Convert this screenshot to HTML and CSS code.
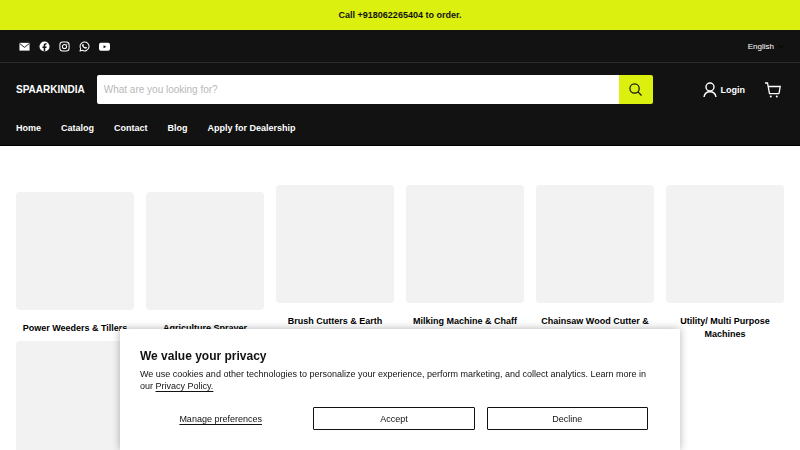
FILE: index.html
```html
<!DOCTYPE html>
<html lang="en">
<head>
  <meta charset="UTF-8" />
  <meta name="viewport" content="width=device-width, initial-scale=1" />
  <title>SPAARKINDIA</title>
  <link rel="stylesheet" href="styles.css">
</head>
<body>

  <div class="announcement">Call +918062265404 to order.</div>

  <header class="site-header">
    <div class="top-bar">
      <div class="social">
        <a href="#" aria-label="Email">
          <svg viewBox="0 0 24 24"><path fill="#fff" d="M1 4h22v17H1z"/><path d="M1 5l11 9 11-9" fill="none" stroke="#121212" stroke-width="2"/></svg>
        </a>
        <a href="#" aria-label="Facebook">
          <svg viewBox="0 0 24 24"><circle cx="12" cy="12" r="11" fill="#fff"/><path fill="#121212" d="M10.200 23v-8H7.400v-3.200h2.800V9.300c0-2.800 1.700-4.300 4.200-4.300 1.200 0 2.400.2 2.400.2v2.700h-1.400c-1.400 0-1.800.9-1.800 1.700v2.200h3.100l-.5 3.200h-2.600v8z"/></svg>
        </a>
        <a href="#" aria-label="Instagram">
          <svg viewBox="0 0 24 24" fill="none" stroke="#fff" stroke-width="2.200"><rect x="2" y="2" width="20" height="20" rx="6"/><circle cx="12" cy="12" r="4.600"/><circle cx="17.500" cy="6.500" r="1.300" fill="#fff" stroke="none"/></svg>
        </a>
        <a href="#" aria-label="WhatsApp">
          <svg viewBox="0 0 24 24"><path fill="none" stroke="#fff" stroke-width="2.200" stroke-linejoin="round" d="M2.200 21.800l1.500-5.200a9.700 9.700 0 1 1 3.700 3.700z"/><path fill="#fff" d="M8.200 6.600c.6-.5 1.200-.3 1.400.2l.9 2c.2.500-.8 1.400-.6 1.800.8 1.500 2 2.600 3.500 3.200.5.200 1.200-1.300 1.700-1.100l2 1c.5.300.3 1.400-.2 2-.9 1-2.200 1.200-3.500.8-3.300-1-5.300-2.900-6.500-5.600-.6-1.500-.1-3.300 1.300-4.300z"/></svg>
        </a>
        <a href="#" aria-label="YouTube">
          <svg viewBox="0 0 24 24"><rect x="0" y="4" width="24" height="17" rx="4" fill="#fff"/><path d="M10 9l6 3.500-6 3.500z" fill="#121212"/></svg>
        </a>
      </div>
      <button class="language" type="button">
        English
        <svg viewBox="0 0 10 6"><path d="M1 1l4 4 4-4" fill="none" stroke="#000" stroke-width="2"/></svg>
      </button>
    </div>

    <div class="main-bar">
      <a href="#" class="logo">SPAARKINDIA</a>
      <form class="search">
        <input type="text" placeholder="What are you looking for?" aria-label="Search" />
        <button type="button" aria-label="Search">
          <svg viewBox="0 0 14 14" fill="none" stroke="#121212" stroke-width="1.300"><circle cx="6" cy="6" r="5"/><path d="M9.600 9.600l3.900 3.900"/></svg>
        </button>
      </form>
      <a href="#" class="login">
        <svg viewBox="0 0 14 16" fill="none" stroke="#fff" stroke-width="1.400"><circle cx="7" cy="5" r="4"/><path d="M1 15c.5-3.300 3-5.300 6-5.300s5.500 2 6 5.300"/></svg>
        Login
      </a>
      <a href="#" class="cart" aria-label="Cart">
        <svg viewBox="0 0 16 16" fill="none" stroke="#fff" stroke-width="1.300"><path d="M0 1h2.500l2 10.700h9.300M3 4.500h12.200l-1.200 7.200"/><circle cx="5.800" cy="14.600" r="1" fill="#fff" stroke="none"/><circle cx="11.800" cy="14.600" r="1" fill="#fff" stroke="none"/></svg>
      </a>
    </div>

    <nav class="main-nav">
      <a href="#">Home</a>
      <a href="#">Catalog</a>
      <a href="#">Contact</a>
      <a href="#">Blog</a>
      <a href="#">Apply for Dealership</a>
    </nav>
  </header>

  <!-- Collections -->
  <main class="collections">
    <a href="#" class="collection"><span class="thumb"></span>Power Weeders &amp; Tillers</a>
    <a href="#" class="collection"><span class="thumb"></span>Agriculture Sprayer</a>
    <a href="#" class="collection"><span class="thumb"></span>Brush Cutters &amp; Earth Augers</a>
    <a href="#" class="collection"><span class="thumb"></span>Milking Machine &amp; Chaff Cutter</a>
    <a href="#" class="collection"><span class="thumb"></span>Chainsaw Wood Cutter &amp; Pruners</a>
    <a href="#" class="collection"><span class="thumb"></span>Utility/ Multi Purpose Machines</a>
    <a href="#" class="collection" aria-label="More products"><span class="thumb"></span></a>
  </main>

  <!-- Cookie banner -->
  <div class="privacy" role="dialog" aria-labelledby="privacyTitle">
    <h2 id="privacyTitle">We value your privacy</h2>
    <p>We use cookies and other technologies to personalize your experience, perform marketing, and collect analytics. Learn more in our <a href="#">Privacy Policy.</a></p>
    <div class="privacy-buttons">
      <button type="button" class="manage">Manage preferences</button>
      <button type="button">Accept</button>
      <button type="button">Decline</button>
    </div>
  </div>

</body>
</html>
```
FILE: styles.css
```css
* {
  box-sizing: border-box;
}

body {
  margin: 0;
  height: 100vh;
  overflow: hidden;
  font-family: "Liberation Sans", Arial, sans-serif;
  font-size: 9px;
  color: #121212;
  background: #fff;
}

a {
  color: inherit;
  text-decoration: none;
}

button,
input {
  font-family: inherit;
  font-size: inherit;
  color: inherit;
}

svg {
  display: block;
}

.announcement {
  padding: 9px 16px;
  background: #dbf00e;
  font-weight: bold;
  line-height: 12px;
  text-align: center;
}

.site-header {
  background: #121212;
  color: #fff;
  border-bottom: 1px solid #000;
}

.top-bar {
  display: flex;
  justify-content: space-between;
  align-items: center;
  height: 33px;
  padding: 0 16px 0 19px;
  border-bottom: 1px solid #2d2d2d;
}

.social {
  display: flex;
  gap: 9px;
}

.social svg {
  width: 11px;
  height: 11px;
}

.language {
  display: flex;
  align-items: center;
  gap: 5px;
  padding: 0;
  border: none;
  background: none;
  font-size: 8px;
}

.language svg {
  width: 5px;
  height: 3px;
}

.main-bar {
  display: flex;
  align-items: center;
  padding: 12px 19px 0 16px;
}

.logo {
  margin-right: 12px;
  font-size: 10px;
  font-weight: bold;
}

.search {
  display: flex;
  flex: 1;
  height: 29px;
  margin-right: 50px;
  border-radius: 2px;
  overflow: hidden;
}

.search input {
  flex: 1;
  min-width: 0;
  padding: 0 7px;
  border: none;
  background: #fff;
  font-size: 10px;
}

.search input::placeholder {
  color: #b8b8b8;
}

.search button {
  display: flex;
  align-items: center;
  justify-content: center;
  width: 34px;
  padding: 0;
  border: none;
  background: #dbf00e;
}

.search svg {
  width: 13px;
  height: 13px;
}

.login {
  display: flex;
  align-items: center;
  gap: 4px;
  font-weight: bold;
}

.login svg {
  width: 14px;
  height: 16px;
}

.cart {
  margin-left: 20px;
}

.cart svg {
  width: 16px;
  height: 16px;
}

.main-nav {
  display: flex;
  gap: 20px;
  padding: 18px 16px 11px;
  font-weight: bold;
  line-height: 12px;
}

.collections {
  display: grid;
  grid-template-columns: repeat(6, 1fr);
  column-gap: 12px;
  align-items: center;
  padding: 39px 16px;
}

.collection {
  color: #000;
  font-weight: bold;
  line-height: 13px;
  text-align: center;
}

.thumb {
  display: block;
  aspect-ratio: 1;
  margin-bottom: 12px;
  border-radius: 4px;
  background: #f2f2f2;
}

/* Cookie banner */
.privacy {
  position: fixed;
  bottom: 0;
  left: 15%;
  right: 15%;
  padding: 20px;
  background: #fff;
  box-shadow: 0 0 8px rgba(0, 0, 0, 0.3);
}

.privacy h2 {
  margin: 0 0 5px;
  font-size: 12px;
  line-height: 14px;
}

.privacy p {
  margin: 0 0 15px;
  line-height: 12px;
}

.privacy p a {
  text-decoration: underline;
  text-underline-offset: 2px;
}

.privacy-buttons {
  display: grid;
  grid-template-columns: repeat(3, 1fr);
  gap: 12px;
  padding-right: 12px;
}

.privacy-buttons button {
  height: 23px;
  padding: 0;
  border: 1px solid #121212;
  border-radius: 1px;
  background: none;
}

.privacy-buttons .manage {
  border-color: transparent;
  text-decoration: underline;
  text-underline-offset: 2px;
}
```
